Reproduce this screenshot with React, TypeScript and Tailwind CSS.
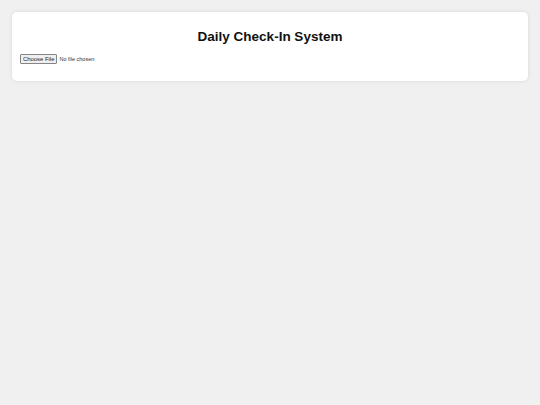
export default function App() {
  return (
    <div className="min-h-screen bg-[#f0f0f0] p-3 font-['Liberation_Sans',Arial,sans-serif] text-black">
      <div className="rounded-[5px] bg-white px-2 pt-[17px] pb-[17px] shadow-[0_0_4px_rgba(0,0,0,0.1)]">
        <h1 className="text-center text-[13.5px] leading-4 font-bold text-[#111]">Daily Check-In System</h1>
        <div className="mt-[9px] flex items-center text-[5.9px] leading-[7px]">
          <span className="rounded-[1px] border border-[#858585] bg-[#efefef] px-[2px] py-[0.5px] text-[#222]">
            Choose File
          </span>
          <span className="ml-[2px] text-[5.5px] text-[#333]">No file chosen</span>
        </div>
      </div>
    </div>
  );
}
